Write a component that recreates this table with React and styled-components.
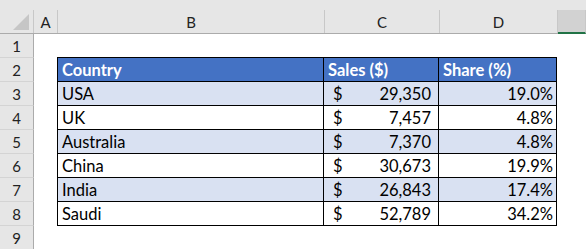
import React from 'react'
import styled, { createGlobalStyle } from 'styled-components'

const GlobalStyle = createGlobalStyle`
    * { box-sizing: border-box; }
    body {
        margin: 0;
        background: #ffffff;
        font-family: Lato, "Liberation Sans", sans-serif;
    }
`

const columns = [
    { key: 'A', width: 24 },
    { key: 'B', width: 267 },
    { key: 'C', width: 115 },
    { key: 'D', width: 118 },
]

const data = [
    { country: 'USA', sales: '29,350', share: '19.0%' },
    { country: 'UK', sales: '7,457', share: '4.8%' },
    { country: 'Australia', sales: '7,370', share: '4.8%' },
    { country: 'China', sales: '30,673', share: '19.9%' },
    { country: 'India', sales: '26,843', share: '17.4%' },
    { country: 'Saudi', sales: '52,789', share: '34.2%' },
]

const App = () => {
    return (
        <>
            <GlobalStyle />
            <Sheet>
                <HeaderBar>
                    <Corner>
                        <svg width="18" height="18" viewBox="0 0 18 18">
                            <polygon points="17,1 17,17 1,17" fill="#c6c6c6" />
                        </svg>
                    </Corner>
                    {columns.map(c => (
                        <ColHead key={c.key} w={c.width}>{c.key}</ColHead>
                    ))}
                    <ColHead selected />
                </HeaderBar>

                <Row>
                    <RowHead>1</RowHead>
                    <Spacer />
                    <Cell w={267} top />
                    <Cell w={115} top />
                    <Cell w={118} top />
                </Row>

                <Row>
                    <RowHead>2</RowHead>
                    <Spacer />
                    <Cell w={267} head first>Country</Cell>
                    <Cell w={115} head>Sales ($)</Cell>
                    <Cell w={118} head>Share (%)</Cell>
                </Row>

                {data.map((d, i) => (
                    <Row key={d.country}>
                        <RowHead>{i + 3}</RowHead>
                        <Spacer />
                        <Cell w={267} band={i % 2 === 0} first>{d.country}</Cell>
                        <Cell w={115} band={i % 2 === 0} money>
                            <span>$</span>
                            <span>{d.sales}</span>
                        </Cell>
                        <Cell w={118} band={i % 2 === 0} right>{d.share}</Cell>
                    </Row>
                ))}

                <Row>
                    <RowHead>9</RowHead>
                </Row>
            </Sheet>
        </>
    )
}

const Sheet = styled.div`
    width: 586px;
    height: 249px;
    overflow: hidden;
    display: flex;
    flex-direction: column;
    color: #000;
`

const HeaderBar = styled.div`
    display: flex;
    height: 34px;
    flex-shrink: 0;
    background: #e6e6e6;
    border-bottom: 1px solid #ababab;
    padding-top: 10px;
`

const Corner = styled.div`
    width: 34px;
    height: 23px;
    border-right: 1px solid #c8c8c8;
    display: flex;
    align-items: flex-end;
    justify-content: flex-end;
    padding: 0 3px 2px 0;
`

const ColHead = styled.div`
    width: ${({ w }) => (w ? `${w}px` : 'auto')};
    flex: ${({ selected }) => (selected ? 1 : 'none')};
    height: ${({ selected }) => (selected ? '24px' : '23px')};
    margin-bottom: ${({ selected }) => (selected ? '-1px' : '0')};
    border-right: 1px solid #c8c8c8;
    border-bottom: ${({ selected }) => (selected ? '2px solid #217346' : 'none')};
    background: ${({ selected }) => (selected ? '#d2d2d2' : 'transparent')};
    display: flex;
    align-items: center;
    justify-content: center;
    font-size: 15px;
    color: #222;
`

const Row = styled.div`
    display: flex;
    height: 24px;
    flex-shrink: 0;
`

const RowHead = styled.div`
    width: 34px;
    height: 24px;
    background: #e6e6e6;
    border-right: 1px solid #ababab;
    border-bottom: 1px solid #d4d4d4;
    display: flex;
    align-items: center;
    justify-content: center;
    padding-top: 1px;
    font-size: 15px;
    color: #222;
`

const Spacer = styled.div`
    width: 23px;
`

const Cell = styled.div`
    width: ${({ w }) => w}px;
    height: 24px;
    display: flex;
    align-items: center;
    padding-top: 1px;
    font-size: 16.5px;
    white-space: nowrap;
    border-bottom: 1px solid #000;
    border-right: ${({ top }) => (top ? 'none' : '1px solid #000')};
    border-left: ${({ first }) => (first ? '1px solid #000' : 'none')};
    background: ${({ head, band }) => (head ? '#4472c4' : band ? '#d9e1f2' : '#ffffff')};
    color: ${({ head }) => (head ? '#ffffff' : '#000000')};
    font-weight: ${({ head }) => (head ? 700 : 400)};
    justify-content: ${({ right, money }) => (right ? 'flex-end' : money ? 'space-between' : 'flex-start')};
    padding-left: ${({ money }) => (money ? '9px' : '4px')};
    padding-right: ${({ money, right }) => (money ? '7px' : right ? '3px' : '4px')};
`

export default App
